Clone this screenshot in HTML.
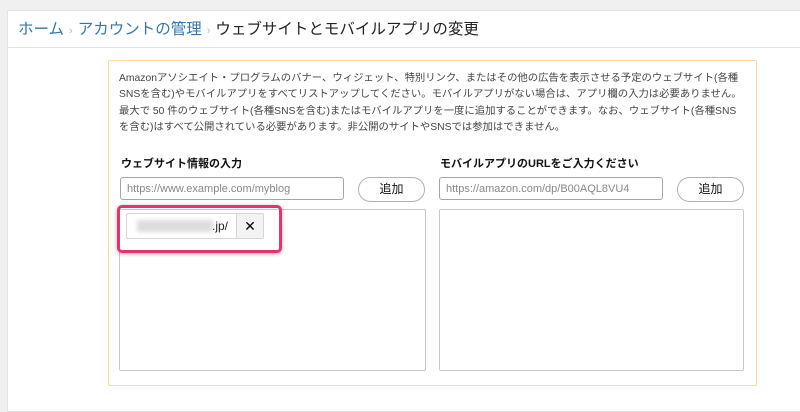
<!DOCTYPE html>
<html><head><meta charset="utf-8"><style>
body{margin:0;width:800px;height:407px;background:#f0f0f0;position:relative;overflow:hidden;font-family:"Liberation Sans","Noto Sans CJK JP",sans-serif;}
.panel{position:absolute;left:7px;top:10px;width:800px;height:400px;background:#fff;border:1px solid #e3e3e3;}
.hdr{position:absolute;left:7px;top:10px;width:800px;height:37px;border-bottom:1px solid #e3e3e3;}
.crumb{position:absolute;left:18px;top:17px;font-size:15.5px;white-space:nowrap;color:#222;}
.crumb a{color:#3377aa;}
.crumb .s{color:#bbb;font-size:11px;margin:0 5px;}
.box{position:absolute;left:108px;top:60px;width:647px;height:324px;border:1px solid #fbdc9e;border-radius:2px;}
.txt{position:absolute;left:119px;top:71px;font-size:10.35px;line-height:16.3px;color:#444;white-space:nowrap;}
.lbl{position:absolute;top:155px;font-size:11px;font-weight:bold;color:#111;}
.inp{position:absolute;top:177px;width:224px;height:23px;border:1px solid #a6a6a6;border-radius:3px;font-size:11px;color:#888;line-height:23px;padding-left:6px;box-sizing:border-box;}
.btn{position:absolute;top:177px;width:67px;height:25px;border:1px solid #adb1b8;border-radius:13px;box-sizing:border-box;font-size:12px;text-align:center;line-height:23px;color:#111;background:#fff;}
.ta{position:absolute;top:209px;height:162px;border:1px solid #c8c8c8;border-radius:2px;box-sizing:border-box;}
.tag{position:absolute;left:126px;top:213px;width:138px;height:26px;border:1px solid #d5d5d5;border-radius:2px;box-sizing:border-box;font-size:12px;}
.tag .x{position:absolute;right:0;top:0;width:26px;height:24px;border-left:1px solid #d5d5d5;background:#f3f3f3;text-align:center;line-height:24px;font-size:14px;}
.hl{position:absolute;left:117px;top:205px;width:165px;height:48px;border:3px solid #e8336a;border-radius:5px;box-sizing:border-box;box-shadow:0 1px 4px rgba(0,0,0,.3);}
</style></head><body>
<div class="panel"></div>
<div class="hdr"></div>
<div class="crumb"><a>ホーム</a><span class="s">›</span><a>アカウントの管理</a><span class="s">›</span>ウェブサイトとモバイルアプリの変更</div>
<div class="box"></div>
<div class="txt">Amazonアソシエイト・プログラムのバナー、ウィジェット、特別リンク、またはその他の広告を表示させる予定のウェブサイト(各種<br>SNSを含む)やモバイルアプリをすべてリストアップしてください。モバイルアプリがない場合は、アプリ欄の入力は必要ありません。<br>最大で 50 件のウェブサイト(各種SNSを含む)またはモバイルアプリを一度に追加することができます。なお、ウェブサイト(各種SNS<br>を含む)はすべて公開されている必要があります。非公開のサイトやSNSでは参加はできません。</div>
<div class="lbl" style="left:121px">ウェブサイト情報の入力</div>
<div class="lbl" style="left:440px">モバイルアプリのURLをご入力ください</div>
<div class="inp" style="left:120px">https://www.example.com/myblog</div>
<div class="btn" style="left:358px">追加</div>
<div class="inp" style="left:439px">https://amazon.com/dp/B00AQL8VU4</div>
<div class="btn" style="left:677px">追加</div>
<div class="ta" style="left:119px;width:307px"></div>
<div class="ta" style="left:439px;width:305px"></div>
<div class="tag"><span style="position:absolute;left:10px;top:6px;width:76px;height:12px;background:#ddd;filter:blur(2px)"></span><span style="position:absolute;left:85px;top:5px;color:#222">.jp/</span><span class="x">✕</span></div>
<div class="hl"></div>
</body></html>
